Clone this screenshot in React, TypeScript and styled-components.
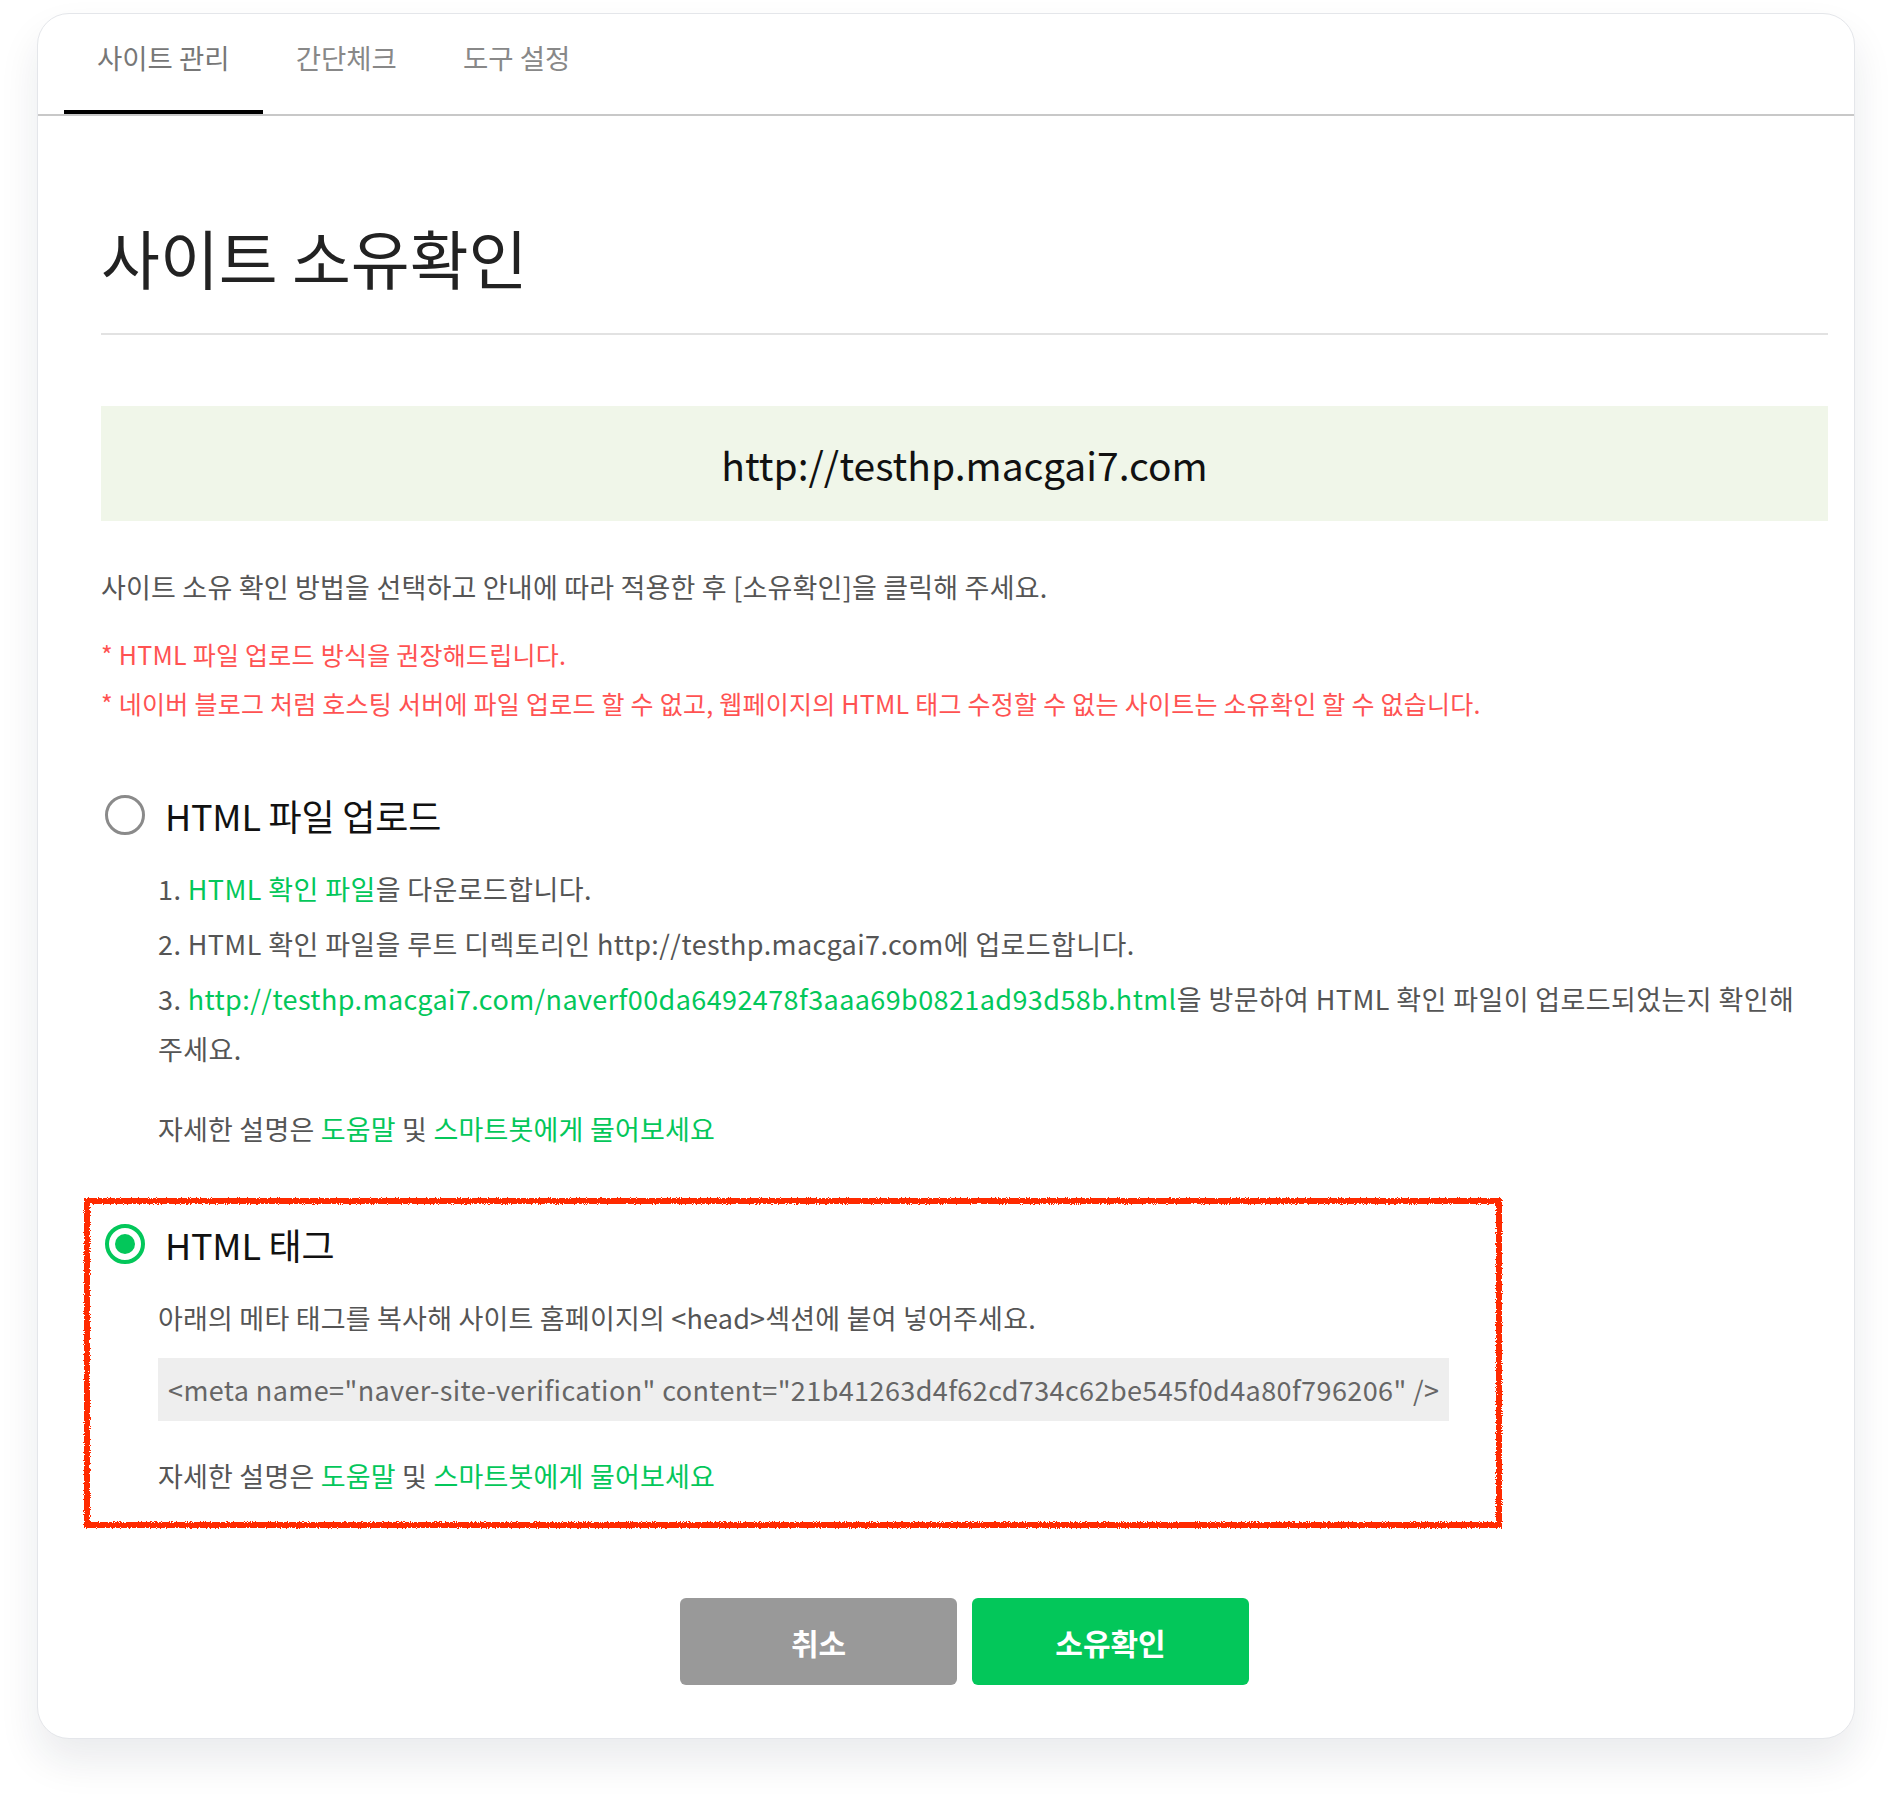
import styled, { createGlobalStyle } from 'styled-components';

const GlobalStyle = createGlobalStyle`
  body {
    margin: 0;
    background: #ffffff;
    font-family: "Noto Sans CJK KR", "Noto Sans", sans-serif;
    color: #555555;
    word-break: keep-all;
  }
  * {
    box-sizing: border-box;
  }
`;

const Page = styled.div`
  padding: 13px 37px 62px;
`;

const Card = styled.div`
  background: #ffffff;
  border: 1px solid #e4e6ea;
  border-radius: 32px;
  box-shadow: 0 22px 40px rgba(20, 30, 50, 0.09);
  overflow: hidden;
`;

const TabBar = styled.div`
  display: flex;
  padding-left: 26px;
  border-bottom: 2px solid #c8c8c8;
`;

const Tab = styled.a<{ $active?: boolean }>`
  display: block;
  height: 100px;
  padding: 23px 33px 0;
  font-size: 27.5px;
  line-height: 40px;
  letter-spacing: 0;
  color: ${({ $active }) => ($active ? '#777777' : '#888888')};
  border-bottom: 4px solid ${({ $active }) => ($active ? '#000000' : 'transparent')};
  text-decoration: none;
`;

const Content = styled.div`
  padding: 0 26px 53px 63px;
`;

const Title = styled.h1`
  margin: 101px 0 0;
  padding-bottom: 38px;
  border-bottom: 2px solid #e2e2e2;
  font-size: 64px;
  line-height: 78px;
  font-weight: 400;
  letter-spacing: 0;
  color: #222222;
`;

const UrlBox = styled.div`
  margin-top: 71px;
  height: 115px;
  display: flex;
  align-items: center;
  justify-content: center;
  background: #f0f6e9;
  font-size: 39px;
  color: #111111;
`;

const Lead = styled.p`
  margin: 46px 0 0;
  font-size: 27px;
  line-height: 40px;
  letter-spacing: 0.2px;
  color: #555555;
`;

const Notes = styled.div`
  margin-top: 23px;
`;

const Note = styled.p`
  margin: 0;
  font-size: 25px;
  line-height: 49px;
  letter-spacing: 0.25px;
  color: #ff5252;
`;

const Method = styled.section<{ $gap: number }>`
  position: relative;
  margin-top: ${({ $gap }) => $gap}px;
`;

const Marked = styled(Method)`
  &::after {
    content: '';
    position: absolute;
    left: -17px;
    top: -21px;
    bottom: -27px;
    width: 1406px;
    border: 6px solid #ff2a00;
    filter: url(#rough);
    pointer-events: none;
  }
`;

const MethodHead = styled.label`
  display: flex;
  align-items: center;
  gap: 20px;
  height: 50px;
  padding-left: 4px;
  font-size: 36px;
  letter-spacing: -0.2px;
  color: #111111;
`;

const Radio = styled.span<{ $checked?: boolean }>`
  flex: none;
  width: 40px;
  height: 40px;
  border-radius: 50%;
  border: ${({ $checked }) => ($checked ? '4px solid #03c75a' : '3.5px solid #8a8a8a')};
  display: flex;
  align-items: center;
  justify-content: center;

  &::before {
    content: '';
    width: 20px;
    height: 20px;
    border-radius: 50%;
    background: ${({ $checked }) => ($checked ? '#03c75a' : 'transparent')};
  }
`;

const Body = styled.div`
  padding-left: 57px;
`;

const Steps = styled.ol`
  list-style: none;
  margin: 24px 0 0;
  padding: 0;
`;

const Step = styled.li`
  font-size: 27px;
  line-height: 50px;
  letter-spacing: 0.4px;
  color: #555555;
  word-break: keep-all;

  & + & {
    margin-top: 5px;
  }
`;

const Green = styled.a`
  color: #03c75a;
  text-decoration: none;
`;

const Help = styled.p<{ $gap: number }>`
  margin: ${({ $gap }) => $gap}px 0 0;
  font-size: 27px;
  line-height: 50px;
  letter-spacing: 0.2px;
  color: #555555;
`;

const Intro = styled.p`
  margin: 29px 0 0;
  font-size: 27px;
  line-height: 40px;
  letter-spacing: 0.2px;
  color: #555555;
`;

const Code = styled.div`
  display: inline-flex;
  align-items: center;
  margin-top: 20px;
  height: 63px;
  padding: 0 10px;
  background: #eeeeee;
  font-size: 27px;
  letter-spacing: 0.4px;
  color: #666666;
`;

const Actions = styled.div`
  display: flex;
  justify-content: center;
  gap: 15px;
  margin-top: 97px;
`;

const Button = styled.button<{ $primary?: boolean }>`
  width: 277px;
  height: 87px;
  border: none;
  border-radius: 6px;
  background: ${({ $primary }) => ($primary ? '#03c75a' : '#999999')};
  color: #ffffff;
  font-family: inherit;
  font-size: 30px;
  font-weight: 700;
  cursor: pointer;
`;

const Defs = styled.svg`
  position: absolute;
  width: 0;
  height: 0;
`;

const siteUrl = 'http://testhp.macgai7.com';
const fileUrl = `${siteUrl}/naverf00da6492478f3aaa69b0821ad93d58b.html`;
const metaTag = '<meta name="naver-site-verification" content="21b41263d4f62cd734c62be545f0d4a80f796206" />';

const HelpLine = ({ gap }: { gap: number }) => (
  <Help $gap={gap}>
    자세한 설명은 <Green href="#help">도움말</Green> 및 <Green href="#bot">스마트봇에게 물어보세요</Green>
  </Help>
);

export default function App() {
  return (
    <>
      <GlobalStyle />
      <Defs aria-hidden="true">
        <filter id="rough">
          <feTurbulence type="fractalNoise" baseFrequency="0.9" numOctaves="2" seed="3" />
          <feDisplacementMap in="SourceGraphic" scale="4" />
        </filter>
      </Defs>
      <Page>
        <Card>
          <TabBar>
            <Tab $active href="#site">사이트 관리</Tab>
            <Tab href="#check">간단체크</Tab>
            <Tab href="#tools">도구 설정</Tab>
          </TabBar>
          <Content>
            <Title>사이트 소유확인</Title>
            <UrlBox>{siteUrl}</UrlBox>
            <Lead>사이트 소유 확인 방법을 선택하고 안내에 따라 적용한 후 [소유확인]을 클릭해 주세요.</Lead>
            <Notes>
              <Note>* HTML 파일 업로드 방식을 권장해드립니다.</Note>
              <Note>* 네이버 블로그 처럼 호스팅 서버에 파일 업로드 할 수 없고, 웹페이지의 HTML 태그 수정할 수 없는 사이트는 소유확인 할 수 없습니다.</Note>
            </Notes>

            <Method $gap={62}>
              <MethodHead>
                <Radio />
                HTML 파일 업로드
              </MethodHead>
              <Body>
                <Steps>
                  <Step>1. <Green href="#file">HTML 확인 파일</Green>을 다운로드합니다.</Step>
                  <Step>2. HTML 확인 파일을 루트 디렉토리인 {siteUrl}에 업로드합니다.</Step>
                  <Step>
                    3. <Green href="#visit">{fileUrl}</Green>을 방문하여 HTML 확인 파일이 업로드되었는지 확인해 주세요.
                  </Step>
                </Steps>
                <HelpLine gap={30} />
              </Body>
            </Method>

            <Marked $gap={65}>
              <MethodHead>
                <Radio $checked />
                HTML 태그
              </MethodHead>
              <Body>
                <Intro>아래의 메타 태그를 복사해 사이트 홈페이지의 &lt;head&gt;섹션에 붙여 넣어주세요.</Intro>
                <Code>{metaTag}</Code>
                <HelpLine gap={30} />
              </Body>
            </Marked>

            <Actions>
              <Button>취소</Button>
              <Button $primary>소유확인</Button>
            </Actions>
          </Content>
        </Card>
      </Page>
    </>
  );
}
